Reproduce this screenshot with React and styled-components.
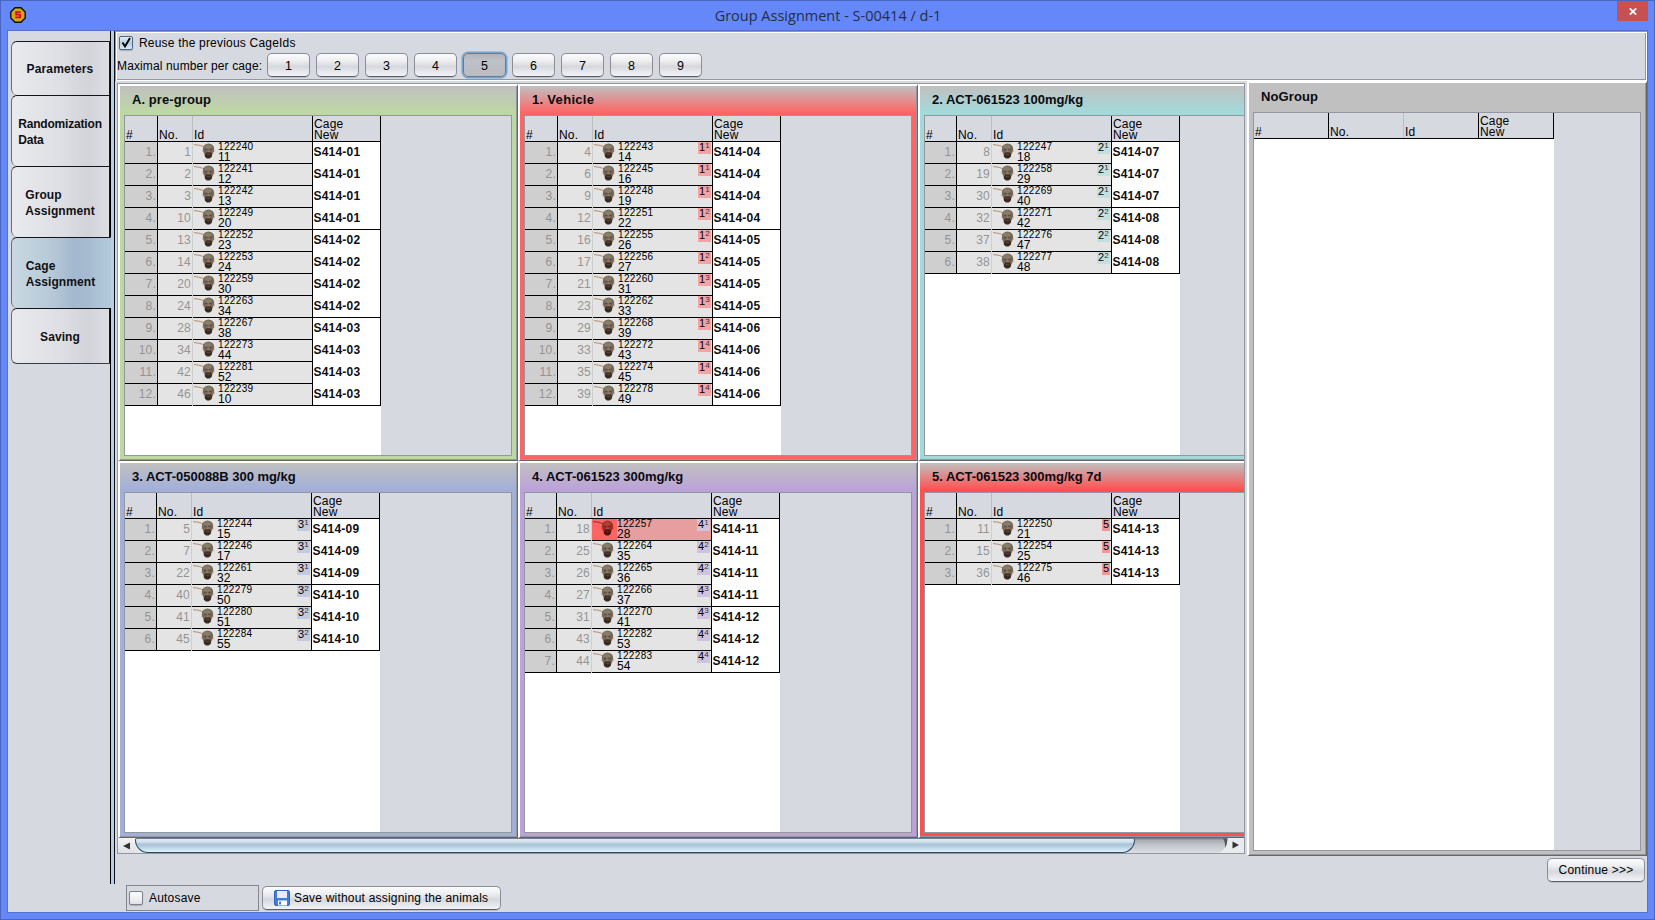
import React from "react";
import styled, { createGlobalStyle, css } from "styled-components";

const GlobalStyle = createGlobalStyle`
  * { box-sizing: border-box; }
  body {
    margin: 0;
    background: #6488fa;
    color: #000;
    font: 12px/16px "Liberation Sans", Arial, sans-serif;
    overflow: hidden;
  }
  button { font: inherit; color: inherit; padding: 0; }
`;

const FACE = "#d6d9e0";
const LINE = "#9297a1";

const Window = styled.div`
  width: 1655px;
  height: 920px;
  display: flex;
  flex-direction: column;
  background: #6488fa;
  border: 1px solid #4b66be;
`;

const TitleBar = styled.header`
  height: 29px;
  flex: none;
  display: flex;
  align-items: flex-start;
  padding: 0 6px 0 9px;
`;

const AppIcon = styled.svg`
  width: 16px;
  height: 16px;
  margin-top: 6px;
`;

const Title = styled.h1`
  flex: 1;
  margin: 0;
  padding-left: 13px;
  text-align: center;
  font: 400 14.5px/29px "Open Sans", "Noto Sans", sans-serif;
  letter-spacing: 0;
  color: #262d48;
`;

const CloseButton = styled.button`
  width: 31px;
  height: 20px;
  border: 0;
  background: #c75050;
  display: grid;
  place-items: center;
`;

const Client = styled.div`
  margin: 0 6px;
  height: 883px;
  display: flex;
  flex-direction: column;
  background: ${FACE};
  border: 1px solid #5570d0;
`;

const Body = styled.div`
  height: 853px;
  display: flex;
`;

const Sidebar = styled.nav`
  width: 107px;
  flex: none;
  padding-top: 10px;
  background: linear-gradient(#000, #000) 102px 0 / 1px 100% no-repeat,
    linear-gradient(#b8cfe2, #b8cfe2) 103px 0 / 3px 100% no-repeat,
    linear-gradient(#0d0d18, #0d0d18) 106px 0 / 1px 100% no-repeat;
`;

const Tab = styled.div`
  margin-left: 3px;
  width: ${(p) => (p.$active ? 100 : 99)}px;
  height: ${(p) => p.$h}px;
  display: flex;
  align-items: center;
  justify-content: center;
  padding: ${(p) => p.$top ?? 2}px 1px 0 0;
  font-weight: 700;
  letter-spacing: ${(p) => p.$ls ?? 0.08}px;
  color: #101014;
  border: 1px solid #14141c;
  border-left-color: #6d7078;
  border-right-color: ${(p) => (p.$active ? "#b0c6da" : "#14141c")};
  border-bottom: ${(p) => (p.$last ? "1px solid #3a3c44" : "0")};
  border-radius: 6px 0 0 6px;
  background: ${(p) =>
    p.$active
      ? "linear-gradient(90deg, #c9d8e2 0%, #b6c8d7 42%, #a4b9cf 62%, #a5bacf 76%, #b3cadc 100%)"
      : "linear-gradient(90deg, #e9eaed 0%, #dddfe4 50%, #d2d4da 78%, #dcdee4 100%)"};
`;

const Main = styled.main`
  flex: 1;
  min-width: 0;
`;

const Toolbar = styled.section`
  height: 50px;
  border: 1px solid ${LINE};
  border-right: 0;
  border-bottom: 0;
  box-shadow: inset 1px 1px 0 #fff, inset -1px -1px 0 #fff, inset -2px -2px 0 ${LINE};
  padding: 3px 0 0 1px;
`;

const CheckRow = styled.label`
  display: flex;
  align-items: center;
  gap: 6px;
  height: 16px;
  padding-left: ${(p) => p.$pad ?? 2}px;
  letter-spacing: ${(p) => p.$ls}px;
`;

const Box = styled.span`
  width: 14px;
  height: 14px;
  flex: none;
  border: 1px solid ${(p) => (p.$on ? "#4c6a85" : "#7d8189")};
  border-radius: 2px;
  background: ${(p) =>
    p.$on
      ? "linear-gradient(#e8eef4, #b4cbdf 50%, #d9ebf6)"
      : "linear-gradient(#fff, #dfe2e8)"};
  box-shadow: 0 1px 1px #a9adb6;
  svg { display: block; margin: -1px 0 0 -1px; overflow: visible; }
`;

const CountRow = styled.div`
  display: flex;
  align-items: center;
  height: 24px;
  margin-top: 2px;
  gap: 6px;
`;

const CountLabel = styled.span`
  width: 144px;
  padding-top: 1px;
  white-space: nowrap;
  letter-spacing: 0.13px;
`;

const buttonSkin = css`
  height: 24px;
  border: 1px solid #8b8e96;
  border-bottom-color: #5b5e66;
  border-radius: 5px;
  background: linear-gradient(#fbfbfc, #eeeff1 30%, #d5d8de 58%, #e2e4e9 75%, #f2f3f7);
  box-shadow: 0 1px 0 #bcbfc6;
`;

const CountButton = styled.button`
  ${buttonSkin}
  width: 43px;
  padding-top: 2px;
  font-size: 12.5px;
  ${(p) =>
    p.$active &&
    css`
      background: linear-gradient(#b0b3ba, #bec1c8 30%, #b9bcc3);
      border-color: #6f7885;
      box-shadow: 0 0 0 1.5px #75a5d3;
    `}
`;

const Panes = styled.div`
  display: flex;
  align-items: flex-start;
`;

const ScrollPane = styled.div`
  margin: 2px 2px 0 2px;
  width: 1128px;
  height: 771px;
  flex: none;
  border: 1px solid ${LINE};
  overflow: hidden;
`;

const GroupGrid = styled.div`
  display: grid;
  grid-template-columns: repeat(3, 400px);
  grid-auto-rows: 377px;
`;

const Panel = styled.section`
  width: 400px;
  height: ${(p) => p.$h || 377}px;
  flex: none;
  display: flex;
  flex-direction: column;
  border: solid;
  border-width: 2px 1px 1px 2px;
  border-color: #fff #666 #666 #fff;
  box-shadow: inset -1px -1px 0 ${LINE};
  padding: 0 5px 4px 4px;
  background: ${(p) => `linear-gradient(#c0c0c0 0, ${p.$c} 27px)`};
`;

const PanelTitle = styled.h2`
  margin: 0;
  height: 29px;
  padding-left: 8px;
  font: 700 13px/28px "Liberation Sans", Arial, sans-serif;
  letter-spacing: ${(p) => p.$ls ?? 0}px;
  white-space: nowrap;
  color: #0a0a10;
`;

const TableBox = styled.div`
  flex: 1;
  border: 1px solid ${LINE};
  background: ${FACE};
  display: flex;
`;

const Table = styled.div`
  width: ${(p) => p.$w}px;
  background: #fff;
`;

const gridCols = css`
  display: grid;
  grid-template-columns: ${(p) => p.$cols};
`;

const HeadRow = styled.div`
  ${gridCols}
  height: 26px;
  background: ${FACE};
  border-bottom: 1px solid #000;
`;

const HeadCell = styled.div`
  display: flex;
  align-items: flex-end;
  padding: 0 0 0 1px;
  line-height: 11px;
  letter-spacing: 0.2px;
  white-space: pre-line;
  border-right: 1px solid ${(p) => (p.$soft ? "#bdbdbd" : "#000")};
`;

const Row = styled.div`
  ${gridCols}
  height: 22px;
`;

const Cell = styled.div`
  border-right: 1px solid ${(p) => (p.$soft ? "#cfcfcf" : "#000")};
  background: linear-gradient(#000, #000) 0 100% / 100% 1px no-repeat, ${(p) => p.$bg || "#e4e4e4"};
  color: #949494;
  text-align: right;
  line-height: 21px;
  padding: 0 1px 0 0;
  letter-spacing: 0.2px;
`;

const IdCell = styled(Cell)`
  display: flex;
  padding: 0 1px 0 0;
  color: #000;
  text-align: left;
  background: linear-gradient(#000, #000) 0 100% / 100% 1px no-repeat,
    ${(p) =>
      p.$alert ? "linear-gradient(90deg, #ff6464 25px, #e69e9e 25px)" : "#e4e4e4"};
`;

const CageCell = styled.div`
  padding: 0 0 0 0.5px;
  line-height: 21px;
  font-weight: 700;
  letter-spacing: 0.2px;
  color: #101010;
  border-right: 1px solid #000;
  ${(p) => p.$end && css`box-shadow: inset 0 -1px 0 #000;`}
`;

const Rat = styled.svg`
  width: 22px;
  height: 17px;
  margin-right: 3px;
  flex: none;
`;

const Ids = styled.div`
  height: 21px;
  overflow: hidden;
`;

const AnimalId = styled.div`
  font-size: 10px;
  line-height: 10px;
  letter-spacing: 0.36px;
`;

const AnimalNo = styled.div`
  font-size: 12px;
  line-height: 11px;
  letter-spacing: 0;
`;

const Badge = styled.span`
  margin-left: auto;
  width: ${(p) => (p.$wide ? 13 : 8)}px;
  height: 12px;
  padding-left: 1px;
  display: flex;
  background: ${(p) => p.$c};
  font-size: 11px;
  line-height: 11px;
  letter-spacing: 0;
  small { font-size: 8px; line-height: 8px; color: #333; }
`;

const ScrollBar = styled.div`
  height: 15px;
  display: flex;
  background: linear-gradient(#75777c, #a9acb2 15%, #c3c6cc 50%, #dcdee3);
`;

const TrackLeft = styled.div`
  width: 17px;
  display: grid;
  place-items: center;
  background: linear-gradient(#f2f3f5, #dfe1e6);
`;

const Thumb = styled.div`
  width: 1000px;
  border: 1px solid #2c4a63;
  border-top-color: #6a7e90;
  border-radius: 2px 2px 14px 14px;
  background: linear-gradient(#e3edf5, #cfdde9 25%, #a8c2d8 40%, #b7d0e1 60%, #e0f3fa);
`;

const ThumbWell = styled.div`
  flex: none;
  display: flex;
  background: linear-gradient(90deg, #e6e8ec 30px, transparent 30px);
`;

const Track = styled.div`
  flex: 1;
`;

const RightEnd = styled.svg`
  width: 25px;
  height: 15px;
  flex: none;
`;

const Continue = styled.button`
  ${buttonSkin}
  display: block;
  width: 98px;
  margin: 2px 2px 0 auto;
  letter-spacing: 0.2px;
`;

const Footer = styled.footer`
  display: flex;
  align-items: center;
  gap: 3px;
  padding: 1px 0 0 118px;
`;

const AutosaveBox = styled.div`
  width: 133px;
  height: 26px;
  padding: 4px 0 0 1px;
  border: 1px solid #84868b;
`;

const SaveButton = styled.button`
  ${buttonSkin}
  width: 239px;
  display: flex;
  align-items: center;
  padding-left: 11px;
  gap: 4px;
  letter-spacing: 0.2px;
  white-space: nowrap;
`;

const GROUPS = [
  { title: "A. pre-group", spacing: 0.08, color: "#bed8a2", sizes: [4, 4, 4], cage: 1,
    rows: [[1, 122240, 11], [2, 122241, 12], [3, 122242, 13], [10, 122249, 20], [13, 122252, 23], [14, 122253, 24], [20, 122259, 30], [24, 122263, 34], [28, 122267, 38], [34, 122273, 44], [42, 122281, 52], [46, 122239, 10]] },
  { title: "1. Vehicle", spacing: 0.3, color: "#ff6464", badge: "#f4a2a2", mark: "1", subs: "111222333444", sizes: [4, 4, 4], cage: 4,
    rows: [[4, 122243, 14], [6, 122245, 16], [9, 122248, 19], [12, 122251, 22], [16, 122255, 26], [17, 122256, 27], [21, 122260, 31], [23, 122262, 33], [29, 122268, 39], [33, 122272, 43], [35, 122274, 45], [39, 122278, 49]] },
  { title: "2. ACT-061523 100mg/kg", color: "#a2dada", badge: "#c3dfdf", mark: "2", subs: "111222", sizes: [3, 3], cage: 7,
    rows: [[8, 122247, 18], [19, 122258, 29], [30, 122269, 40], [32, 122271, 42], [37, 122276, 47], [38, 122277, 48]] },
  { title: "3. ACT-050088B 300 mg/kg", spacing: -0.03, color: "#a2afd9", badge: "#c3c9de", mark: "3", subs: "111222", sizes: [3, 3], cage: 9,
    rows: [[5, 122244, 15], [7, 122246, 17], [22, 122261, 32], [40, 122279, 50], [41, 122280, 51], [45, 122284, 55]] },
  { title: "4. ACT-061523 300mg/kg", color: "#bca2d9", badge: "#d0c3de", mark: "4", subs: "1223344", sizes: [4, 3], cage: 11, alert: 0,
    rows: [[18, 122257, 28], [25, 122264, 35], [26, 122265, 36], [27, 122266, 37], [31, 122270, 41], [43, 122282, 53], [44, 122283, 54]] },
  { title: "5. ACT-061523 300mg/kg 7d", spacing: -0.03, color: "#ff5050", badge: "#f29898", mark: "5", sizes: [3], cage: 13,
    rows: [[11, 122250, 21], [15, 122254, 25], [36, 122275, 46]] },
];

function cagesOf(group) {
  return group.sizes.flatMap((n, g) =>
    Array.from({ length: n }, (_, i) => ({
      name: "S414-" + String(group.cage + g).padStart(2, "0"),
      end: i === n - 1,
    }))
  );
}

function RatIcon({ alert }) {
  return (
    <Rat viewBox="0 0 22 17">
      <path d="M1 2.6 Q6 2.8 11 4.6" fill="none" stroke={alert ? "#7a3a20" : "#bd8d68"} strokeWidth="1" />
      <path d="M9.5 8.5 l2.5 3 M21.5 8.5 l-2.5 3" stroke={alert ? "#c44" : "#d2a794"} strokeWidth="1.3" />
      <path d="M11.5 11 h8 l-.8 4 -2.2 1.4 h-2.6 l-2 -1.6z" fill={alert ? "#4d1511" : "#3a2b22"} />
      <ellipse cx="15.5" cy="7" rx="5.7" ry="5.6" fill={alert ? "#9c2f24" : "#736857"} />
      <ellipse cx="15" cy="4.9" rx="3.8" ry="2.5" fill={alert ? "#ab4034" : "#877b69"} />
      <path d="M12.4 7.3 h1.8 M16.6 7.3 h1.8" stroke={alert ? "#5d120e" : "#403a33"} strokeWidth="1" />
      <path d="M14.4 9.2 h2.2" stroke={alert ? "#d55" : "#b58470"} strokeWidth="1" />
      <path d="M12.8 11.2 h5.6" stroke={alert ? "#4d1511" : "#3a2b22"} strokeWidth="1.4" />
    </Rat>
  );
}

function TableHead({ cols }) {
  return (
    <HeadRow $cols={cols}>
      <HeadCell>#</HeadCell>
      <HeadCell $soft>No.</HeadCell>
      <HeadCell>Id</HeadCell>
      <HeadCell>{"Cage\nNew"}</HeadCell>
    </HeadRow>
  );
}

function GroupPanel({ group }) {
  const first = group.rows.length > 9 ? 33 : 32;
  const cols = `${first}px 35px 120px 68px`;
  const cages = cagesOf(group);
  return (
    <Panel $c={group.color}>
      <PanelTitle $ls={group.spacing}>{group.title}</PanelTitle>
      <TableBox>
        <Table $w={first + 223}>
          <TableHead cols={cols} />
          {group.rows.map(([no, id, tag], i) => (
            <Row key={id} $cols={cols}>
              <Cell $bg="#cfcfcf">{i + 1}.</Cell>
              <Cell $soft>{no}</Cell>
              <IdCell $alert={group.alert === i}>
                <RatIcon alert={group.alert === i} />
                <Ids>
                  <AnimalId>{id}</AnimalId>
                  <AnimalNo>{tag}</AnimalNo>
                </Ids>
                {group.mark && (
                  <Badge $c={group.badge} $wide={!!group.subs}>
                    {group.mark}
                    {group.subs && <small>{group.subs[i]}</small>}
                  </Badge>
                )}
              </IdCell>
              <CageCell $end={cages[i].end}>{cages[i].name}</CageCell>
            </Row>
          ))}
        </Table>
      </TableBox>
    </Panel>
  );
}

function HorizontalScroll() {
  return (
    <ScrollBar>
      <TrackLeft>
        <svg width="7" height="8" viewBox="0 0 7 8"><path d="M7 .5v7L0 4z" fill="#333" /></svg>
      </TrackLeft>
      <ThumbWell><Thumb /></ThumbWell>
      <Track />
      <RightEnd viewBox="0 0 25 15">
        <path d="M8.5 0H25V15H0Q8.5 11 8.5 0z" fill="#e9ebee" />
        <path d="M4 0.5H8.5Q8.5 6 6 10Q6.5 4 4 .5z" fill="#55585e" />
        <path d="M13.5 3.5v7l6.5-3.5z" fill="#333" />
      </RightEnd>
    </ScrollBar>
  );
}

export default function App() {
  return (
    <Window>
      <GlobalStyle />
      <TitleBar>
        <AppIcon viewBox="0 0 16 16">
          <path d="M5 .8h6L15.2 5v6L11 15.2H5L.8 11V5z" fill="#d9a514" stroke="#101010" strokeWidth="1.4" />
          <path d="M10.7 5.2H6.1v2.5h4v2.7H5.3" fill="none" stroke="#c8102e" strokeWidth="1.8" />
        </AppIcon>
        <Title>Group Assignment - S-00414 / d-1</Title>
        <CloseButton aria-label="Close">
          <svg width="8" height="7" viewBox="0 0 8 7"><path d="M.8.3l6.4 6.4M7.2.3L.8 6.7" stroke="#fff" strokeWidth="1.7" /></svg>
        </CloseButton>
      </TitleBar>
      <Client>
        <Body>
          <Sidebar>
            <Tab $h={54} $top={0} $ls={0.15}>Parameters</Tab>
            <Tab $h={71} $ls={-0.18}>Randomization<br />Data</Tab>
            <Tab $h={71}>Group<br />Assignment</Tab>
            <Tab $h={71} $active>Cage<br />Assignment</Tab>
            <Tab $h={56} $top={1} $last>Saving</Tab>
          </Sidebar>
          <Main>
            <Toolbar>
              <CheckRow $ls={0.2}>
                <Box $on>
                  <svg width="14" height="14" viewBox="0 0 14 14"><path d="M3.5 6.5L6 10.5 11 2" fill="none" stroke="#000" strokeWidth="1.9" /></svg>
                </Box>
                Reuse the previous CageIds
              </CheckRow>
              <CountRow>
                <CountLabel>Maximal number per cage:</CountLabel>
                {[1, 2, 3, 4, 5, 6, 7, 8, 9].map((n) => (
                  <CountButton key={n} $active={n === 5}>{n}</CountButton>
                ))}
              </CountRow>
            </Toolbar>
            <Panes>
              <ScrollPane>
                <GroupGrid>
                  {GROUPS.map((g) => <GroupPanel key={g.title} group={g} />)}
                </GroupGrid>
                <HorizontalScroll />
              </ScrollPane>
              <Panel $c="#c0c0c0" $h={775}>
                <PanelTitle $ls={0.1}>NoGroup</PanelTitle>
                <TableBox>
                  <Table $w={300}>
                    <TableHead cols="75px 75px 75px 75px" />
                  </Table>
                </TableBox>
              </Panel>
            </Panes>
            <Continue>Continue &gt;&gt;&gt;</Continue>
          </Main>
        </Body>
        <Footer>
          <AutosaveBox>
            <CheckRow $ls={0.2} $pad={1}><Box />Autosave</CheckRow>
          </AutosaveBox>
          <SaveButton>
            <svg width="16" height="16" viewBox="0 0 16 16">
              <rect x=".5" y=".5" width="15" height="15" rx="1.5" fill="#3f7ddb" stroke="#2f66c4" />
              <rect x="3" y="1" width="10" height="7" fill="#e4eefb" />
              <rect x="4" y="10.5" width="9" height="5" fill="#fff" />
              <rect x="5" y="11.5" width="2" height="3" fill="#3f7ddb" />
            </svg>
            Save without assigning the animals
          </SaveButton>
        </Footer>
      </Client>
    </Window>
  );
}
